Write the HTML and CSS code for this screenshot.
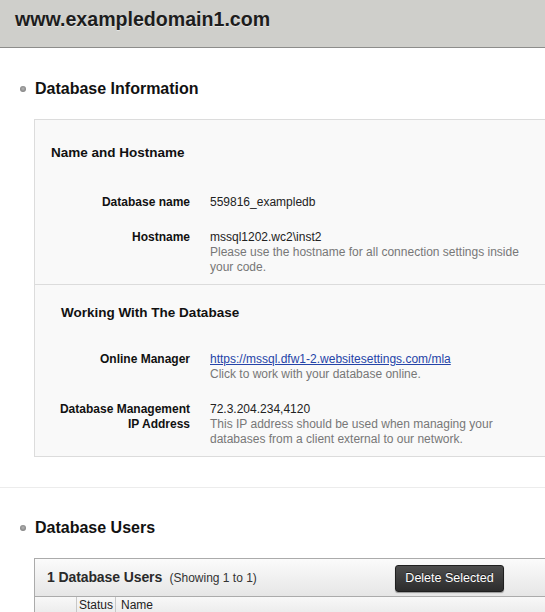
FILE: index.html
```html
<!DOCTYPE html>
<html lang="en">
<head>
<meta charset="utf-8">
<title>www.exampledomain1.com - Database</title>
<link rel="stylesheet" href="styles.css">
</head>
<body>
<header class="topbar">
  <h1 class="site-title">www.exampledomain1.com</h1>
</header>
<main class="content">
  <section class="block">
    <h2 class="block-title">Database Information</h2>
    <div class="panel">
      <div class="panel-section">
        <h3 class="section-title">Name and Hostname</h3>
        <dl class="fields">
          <dt>Database name</dt>
          <dd>559816_exampledb</dd>
          <dt>Hostname</dt>
          <dd>mssql1202.wc2\inst2<span class="note">Please use the hostname for all connection settings inside your code.</span></dd>
        </dl>
      </div>
      <div class="panel-section second">
        <h3 class="section-title">Working With The Database</h3>
        <dl class="fields">
          <dt>Online Manager</dt>
          <dd><a class="link" href="#">https://mssql.dfw1-2.websitesettings.com/mla</a><span class="note">Click to work with your database online.</span></dd>
          <dt>Database Management<br>IP Address</dt>
          <dd>72.3.204.234,4120<span class="note">This IP address should be used when managing your databases from a client external to our network.</span></dd>
        </dl>
      </div>
    </div>
  </section>
  <hr class="sep">
  <section class="block users">
    <h2 class="block-title">Database Users</h2>
    <div class="grid-box">
      <div class="grid-head">
        <div class="grid-title"><strong>1 Database Users</strong> <span class="grid-count">(Showing 1 to 1)</span></div>
        <button class="btn-dark" type="button">Delete Selected</button>
      </div>
      <div class="grid-cols">
        <span class="col-check"></span>
        <span class="col-status">Status</span>
        <span class="col-name">Name</span>
      </div>
    </div>
  </section>
</main>
</body>
</html>
```
FILE: styles.css
```css
html, body {
  margin: 0;
  padding: 0;
  overflow: hidden;
  background: #fff;
}

body {
  font-family: "Liberation Sans", Arial, sans-serif;
  font-size: 12px;
  color: #222;
}

.topbar {
  height: 47px;
  background: #cfcfcb;
  border-bottom: 1px solid #8d8d8b;
  padding-left: 15px;
}

.site-title {
  margin: 0;
  font-size: 19.6px;
  font-weight: bold;
  line-height: 38px;
  color: #1d1d1d;
  text-shadow: 0 1px 0 rgba(255, 255, 255, 0.5);
}

.block-title {
  display: flex;
  align-items: center;
  gap: 9px;
  margin: 31px 0 20px;
  font-size: 16px;
  line-height: 20px;
  font-weight: bold;
  color: #111;
}

.block-title::before {
  content: "";
  width: 6px;
  height: 6px;
  margin-left: 20px;
  border-radius: 50%;
  background: radial-gradient(circle at 50% 45%, #b5b5b5 0, #8a8a8a 60%, #6f6f6f 100%);
}

.panel {
  margin-left: 34px;
  width: 560px;
  background: #f9f9f9;
  border: 1px solid #dcdcdc;
}

.panel-section {
  padding: 25px 0 9px;
}

.panel-section.second {
  border-top: 1px solid #dcdcdc;
  padding-top: 20px;
}

.section-title {
  margin: 0 0 34px 16px;
  font-size: 13.5px;
  line-height: 16px;
  font-weight: bold;
  color: #111;
}

.second .section-title {
  margin: 0 0 31px 26px;
}

.fields {
  display: grid;
  grid-template-columns: 155px 310px;
  column-gap: 20px;
  row-gap: 20px;
  margin: 0;
  line-height: 15px;
}

.fields dt {
  text-align: right;
  font-weight: bold;
  color: #111;
}

.fields dd {
  margin: 0;
  color: #222;
}

.note {
  display: block;
  color: #777;
}

.link {
  color: #2544a8;
  text-decoration: underline;
}

.sep {
  margin: 30px 0 0;
  border: 0;
  border-top: 1px solid #ececec;
  height: 0;
}

.users .block-title {
  margin-top: 30px;
}

.grid-box {
  margin-left: 34px;
  width: 560px;
  border: 1px solid #ababab;
  border-bottom: 0;
}

.grid-head {
  display: flex;
  align-items: center;
  height: 37px;
  background: linear-gradient(#fbfbfb, #e6e6e6);
  border-bottom: 1px solid #ababab;
}

.grid-title {
  width: 360px;
  padding-left: 12px;
  box-sizing: border-box;
  color: #222;
  line-height: 20px;
}

.grid-title strong {
  font-size: 14px;
  letter-spacing: -0.1px;
  color: #2a2a2a;
}

.grid-count {
  margin-left: 4px;
  font-size: 12px;
  color: #333;
}

.btn-dark {
  width: 109px;
  height: 27px;
  margin-top: 1px;
  padding: 0;
  font-family: "Liberation Sans", Arial, sans-serif;
  font-size: 12.5px;
  color: #fff;
  background: linear-gradient(#4d4d4d, #2c2c2c);
  border: 1px solid #1f1f1f;
  border-radius: 3px;
  box-shadow: 0 1px 1px rgba(0, 0, 0, 0.35);
  text-shadow: 0 -1px 0 rgba(0, 0, 0, 0.5);
}

.grid-cols {
  display: flex;
  background: linear-gradient(#f8f8f8, #e9e9e9);
  line-height: 15px;
  padding: 1px 0 4px;
  color: #222;
}

.col-check {
  width: 41px;
  border-right: 1px solid #c8c8c8;
  margin: -1px 0 -4px;
}

.col-status {
  width: 36px;
  padding-left: 2px;
  border-right: 1px solid #c8c8c8;
  margin: -1px 0 -4px;
  padding-top: 1px;
}

.col-name {
  padding-left: 5px;
}
```
